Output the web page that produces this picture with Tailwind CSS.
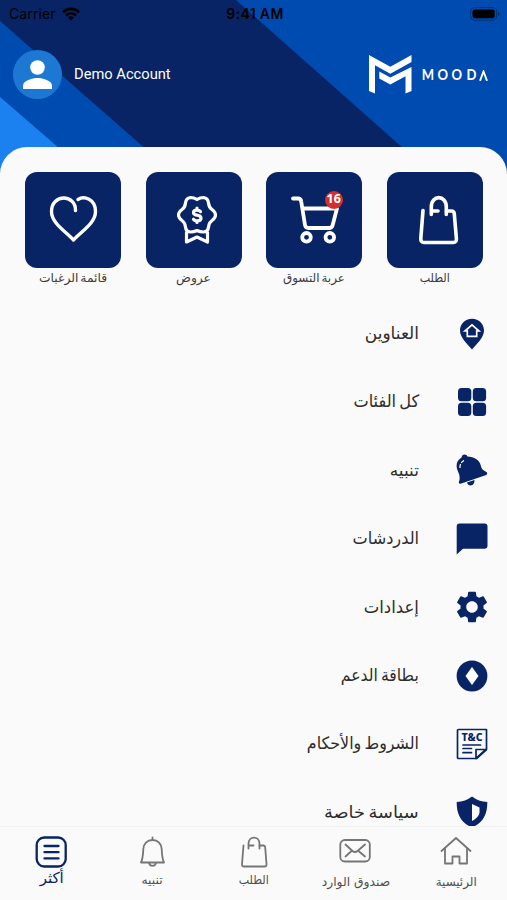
<!DOCTYPE html>
<html lang="ar">
<head>
  <meta charset="UTF-8">
  <meta name="viewport" content="width=device-width, initial-scale=1.0">
  <title>Mooda</title>
  <script src="https://cdn.jsdelivr.net/npm/@tailwindcss/browser@4"></script>
</head>
<body class="bg-[#fafafa] font-['DejaVu_Sans',sans-serif]">
  <div class="relative w-[507px] h-[900px] overflow-hidden flex flex-col">

    <!-- Header background -->
    <svg class="absolute inset-x-0 top-0" width="507" height="180" viewBox="0 0 507 180">
      <rect width="507" height="180" fill="#082465"/>
      <path d="M0 21L181 180H0z" fill="#004baf"/>
      <path d="M0 97L96 180H0z" fill="#1b80f0"/>
      <path d="M236 0L439 180H507V0z" fill="#004baf"/>
    </svg>

    <!-- Status bar -->
    <div class="relative h-[27px] shrink-0 flex items-center justify-between pl-[9px] pr-[6px] text-black font-['Inter',sans-serif] text-[14px]">
      <div class="flex items-center gap-[6px] w-[120px]">
        <span class="tracking-[0.1px]">Carrier</span>
        <svg width="18" height="14" viewBox="0 0 18 14" fill="none" stroke="#000" stroke-width="2.6">
          <path d="M1 5.2C5.500.8 12.500.8 17 5.2"/>
          <path d="M4 8.500c2.900-2.700 7.100-2.700 10 0"/>
          <path d="M9 13.500L6 10.500c1.800-1.600 4.200-1.600 6 0z" fill="#000" stroke="none"/>
        </svg>
      </div>
      <span class="font-semibold tracking-[0.35px]">9:41 AM</span>
      <div class="w-[120px] flex justify-end">
        <svg width="31" height="14" viewBox="0 0 31 14">
          <rect x=".6" y=".6" width="26" height="12.600" rx="4" fill="none" stroke="#000" stroke-opacity=".35"/>
          <rect x="2.500" y="2.500" width="22.200" height="8.800" rx="2.200"/>
          <path d="M28 5v4c2-.6 2-3.400 0-4z" fill-opacity=".4"/>
        </svg>
      </div>
    </div>

    <!-- Account + logo -->
    <div class="relative h-[120px] shrink-0 flex items-start justify-between pl-[13px] pr-[19px] pt-[23px]">
      <div class="flex items-center gap-3">
        <svg width="49" height="49" viewBox="0 0 49 49">
          <circle cx="24.500" cy="24.500" r="24.500" fill="#1c78d2"/>
          <circle cx="24.500" cy="17.500" r="7.300" fill="#fff"/>
          <path d="M10 39v-3.500c0-4.900 9.700-7.500 14.500-7.500S39 30.600 39 35.500V39z" fill="#fff"/>
        </svg>
        <span class="text-white font-['Roboto',sans-serif] text-[14.700px]">Demo Account</span>
      </div>
      <div class="flex items-center gap-[9px] pt-[5px]">
        <svg width="43" height="39" viewBox="0 0 43 39" fill="#fff">
          <path d="M0 0L21.300 11.800 42.500 0v7L21.300 18.700 6 10.200V38.500L0 36z"/>
          <path d="M10.300 16.500L21.300 22.600 42.500 12v24l-6 2.500V21.200L21.300 29.500 10.300 23.500z"/>
        </svg>
        <div class="w-[67px] flex items-center justify-between text-white font-['Lato',sans-serif] font-bold text-[14.500px] leading-none pt-[2px]">
          <span class="scale-x-90">M</span><span class="scale-x-90">O</span><span class="scale-x-90">O</span><span class="scale-x-90">D</span>
          <svg width="9" height="11" viewBox="0 0 9 11" fill="none" stroke="#fff" stroke-width="1.900"><path d="M1 10.800L4.500 1.500 8 10.800"/></svg>
        </div>
      </div>
    </div>

    <!-- Sheet -->
    <main dir="rtl" class="relative flex-1 min-h-0 overflow-hidden bg-[#fafafa] rounded-t-[27px] pt-[25px]">
      <div class="flex justify-between pr-[24.500px] pl-[25px] text-[12.300px] text-[#3c3c3c] [word-spacing:-2px]">
        <div class="w-24 flex flex-col items-center">
          <div class="size-24 rounded-[12px] bg-[#082465]">
            <svg width="96" height="96" viewBox="0 0 96 96" fill="none" stroke="#fff" stroke-width="3.600" stroke-linecap="round" stroke-linejoin="round">
              <path d="M36 38.500L33.800 66.500q-.2 4 3.200 4H66.200q3.500 0 3.200-4L67.300 42q-.2-3-3-3H59.500"/>
              <path d="M44.300 42.500V35c0-12.500 15-12.500 15 0v7.500M44.300 39H51"/>
            </svg>
          </div>
          <span class="leading-[20px] whitespace-nowrap scale-x-90">الطلب</span>
        </div>
        <div class="w-24 flex flex-col items-center">
          <div class="relative size-24 rounded-[12px] bg-[#082465]">
            <svg width="96" height="96" viewBox="0 0 96 96" fill="none" stroke="#fff" stroke-width="3.800" stroke-linecap="round" stroke-linejoin="round">
              <path d="M27 26.500h5q2.800 0 3.200 3L39 53q.5 3 3.500 3H63q3 0 3.700-3L71 36.500H37"/>
              <circle cx="40.500" cy="65.300" r="4.300"/>
              <circle cx="63.800" cy="65.300" r="4.300"/>
            </svg>
            <span class="absolute left-[59px] top-[19px] size-[17.500px] rounded-full bg-[#d32f2f] text-white font-['Noto_Sans',sans-serif] font-bold text-[12.500px] flex items-center justify-center">16</span>
          </div>
          <span class="leading-[20px] whitespace-nowrap scale-x-[.97]">عربة التسوق</span>
        </div>
        <div class="w-24 flex flex-col items-center">
          <div class="size-24 rounded-[12px] bg-[#082465]">
            <svg width="96" height="96" viewBox="0 0 96 96" fill="none" stroke="#fff" stroke-width="3.200" stroke-linecap="round" stroke-linejoin="round">
              <path d="M51 27.500Q54 25.500 57.500 25.500 62 26 62.500 31 63 35.500 66 37.500 69.500 40 69.500 43 69.500 46 66 48.500 63 50.500 62.500 55 62 60 57.500 60 54 60 51 58.500 48 60 44.500 60 40 60 39.500 55 39 50.500 36 48.500 32.500 46 32.500 43 32.500 40 36 37.500 39 35.500 39.500 31 40 26 44.500 25.500 48 25.500 51 27.500z"/>
              <path d="M40.500 60.500v9.500l10.500-5 10.500 5V60.500"/>
              <path d="M54.500 39.700q-1-1.500-3.500-1.500-3.500 0-3.500 2.600 0 1.800 3.500 2.400 4 .7 4 3 0 2.600-4 2.600-2.500 0-3.500-1.500M51 36v2M51 49V50.500"/>
            </svg>
          </div>
          <span class="leading-[20px] whitespace-nowrap">عروض</span>
        </div>
        <div class="w-24 flex flex-col items-center">
          <div class="size-24 rounded-[12px] bg-[#082465]">
            <svg width="96" height="96" viewBox="0 0 96 96" fill="none" stroke="#fff" stroke-width="3.400" stroke-linecap="round" stroke-linejoin="round">
              <path d="M50.500 38.500C51 22 26.500 21.500 26.500 39.500 26.500 51 40 59 48.500 68 57 59 70.500 51 70.500 39.500 70.500 27 59 23.500 53 27.500"/>
            </svg>
          </div>
          <span class="leading-[20px] whitespace-nowrap">قائمة الرغبات</span>
        </div>
      </div>

      <ul class="mt-[11.500px] text-[17px] text-[#2d2d2d] [word-spacing:-2px]">
        <li class="h-[68.400px] flex items-center pr-[19px] gap-[37px]">
          <svg width="32" height="32" viewBox="0 0 32 32"><path d="M16 .7C9 .7 4 6 4 12.500 4 19.500 11 25.500 16 31.500 21 25.500 28 19.500 28 12.500 28 6 23 .7 16 .7z" fill="#082465"/><path d="M9 13L16 6.800l7 6.200H20.700v5.300h-9.400V13z" fill="none" stroke="#fff" stroke-width="1.700"/></svg>
          <span>العناوين</span>
        </li>
        <li class="h-[68.400px] flex items-center pr-[19px] gap-[37px]">
          <svg width="32" height="32" viewBox="0 0 32 32" fill="#082465"><rect x="2" y="2" width="13.300" height="13.300" rx="3.500"/><rect x="16.800" y="2" width="13.300" height="13.300" rx="3.500"/><rect x="2" y="16.800" width="13.300" height="13.300" rx="3.500"/><rect x="16.800" y="16.800" width="13.300" height="13.300" rx="3.500"/></svg>
          <span class="origin-right scale-x-[.95]">كل الفئات</span>
        </li>
        <li class="h-[68.400px] flex items-center pr-[19px] gap-[37px]">
          <svg width="32" height="32" viewBox="0 0 32 32"><path d="M5.500 3.500Q6 .5 8.500.5 11 .5 11.500 2.500C18 2.500 23.500 6 24.800 11.500Q25.500 16 30.500 18 32 19.500 30.300 21L4.500 29.800Q2 29.500 3.200 27 4.500 22.500 2.200 18C-.8 12 .5 6.500 5.500 3.500z" fill="#082465"/><path d="M11 28.500L18.500 26Q18.500 30.500 15.500 31.300 12 32 11 28.500z" fill="#082465"/><path d="M4 14Q3.500 9 8 6.500" fill="none" stroke="#fff" stroke-width="1.200" stroke-dasharray="4 1.500"/></svg>
          <span>تنبيه</span>
        </li>
        <li class="h-[68.400px] flex items-center pr-[19px] gap-[37px]">
          <svg width="32" height="32" viewBox="0 0 32 32" fill="#082465"><path d="M3.500 .5H28.500Q31.500 .5 31.500 3.500V22.700Q31.500 25.700 28.500 25.700H7L.7 31.500V3.500Q.7 .5 3.500 .5z"/></svg>
          <span class="origin-right scale-x-[.95]">الدردشات</span>
        </li>
        <li class="h-[68.400px] flex items-center pr-[19px] gap-[37px]">
          <svg width="32" height="32" viewBox="2 2 20 20" fill="#082465"><path d="M19.140 12.940c.04-.3.060-.61.060-.94 0-.32-.02-.64-.07-.94l2.030-1.580c.18-.14.230-.41.120-.61l-1.920-3.320c-.12-.22-.37-.29-.59-.22l-2.390.96c-.5-.38-1.030-.7-1.620-.94l-.36-2.540c-.04-.24-.24-.41-.48-.41h-3.840c-.24 0-.43.170-.47.410l-.36 2.540c-.59.240-1.130.57-1.620.94l-2.390-.96c-.22-.08-.47 0-.59.220L2.740 8.870c-.12.210-.08.470.12.610l2.030 1.580c-.05.300-.09.630-.09.940s.02.640.070.940l-2.030 1.580c-.18.140-.23.410-.12.610l1.920 3.320c.12.220.37.290.59.220l2.390-.96c.5.380 1.030.7 1.620.94l.36 2.540c.05.240.24.410.48.410h3.840c.24 0 .44-.17.470-.41l.36-2.540c.59-.24 1.130-.56 1.620-.94l2.390.96c.22.080.47 0 .59-.22l1.920-3.320c.12-.22.070-.47-.12-.61l-2.010-1.580zM12 15.600c-1.980 0-3.600-1.620-3.600-3.600s1.620-3.600 3.600-3.600 3.600 1.620 3.600 3.600-1.620 3.600-3.600 3.600z"/></svg>
          <span class="origin-right scale-x-[.97]">إعدادات</span>
        </li>
        <li class="h-[68.400px] flex items-center pr-[19px] gap-[37px]">
          <svg width="32" height="32" viewBox="0 0 32 32"><circle cx="16" cy="16" r="15.400" fill="#082465"/><path d="M16 7L22.500 16 16 25 9.500 16z" fill="#fff"/></svg>
          <span class="origin-right scale-x-[.92]">بطاقة الدعم</span>
        </li>
        <li class="h-[68.400px] flex items-center pr-[19px] gap-[37px]">
          <svg width="32" height="32" viewBox="0 0 32 32" fill="none" stroke="#082465" stroke-width="1.700" stroke-linejoin="round" stroke-linecap="round">
            <path d="M2.500 1.500H30.500V21.500L20.500 30.500H2.500Q1.500 30.500 1.500 29.500V2.500Q1.500 1.500 2.500 1.500z"/>
            <path d="M30 21.500H20V30.500z"/>
            <path d="M7 17h17.500M7 20.500h8.500M7 24.700h8.500"/>
            <text x="16" y="12.800" direction="ltr" text-anchor="middle" textLength="21" lengthAdjust="spacingAndGlyphs" font-family="Noto Sans" font-weight="800" font-size="10.500" fill="#082465" stroke="none">T&amp;C</text>
          </svg>
          <span class="origin-right scale-x-[.935]">الشروط والأحكام</span>
        </li>
        <li class="h-[68.400px] flex items-center pr-[19px] gap-[37px]">
          <svg width="32" height="32" viewBox="0 0 32 32"><path d="M16 .5Q22.500 5.500 31.300 6C31.500 18 27.500 26.500 16 31.500 4.500 26.500.5 18 .7 6Q9.500 5.500 16 .5z" fill="#082465"/><path d="M16 8L23.500 11.500V17Q22.500 21.500 16 25z" fill="#fff"/></svg>
          <span class="origin-right scale-x-[1.045]">سياسة خاصة</span>
        </li>
      </ul>
    </main>

    <!-- Bottom navigation -->
    <nav dir="rtl" class="relative h-[74px] shrink-0 grid grid-cols-5 bg-[#fafafa] border-t border-[#f1f1f1] pt-[9px] text-[12.300px] text-[#4f4f4f]">
      <div class="flex flex-col items-center">
        <svg width="32" height="32" viewBox="0 0 32 32" fill="none" stroke="#757575" stroke-width="1.800" stroke-linecap="round" stroke-linejoin="round"><path d="M1.500 15L16 2 30.500 15"/><path d="M5 12.500V27.500H12.500V20.500H19.500V27.500H27V12.500"/></svg>
        <span class="mt-[4px] leading-[20px] whitespace-nowrap scale-x-[.97]">الرئيسية</span>
      </div>
      <div class="flex flex-col items-center">
        <svg width="32" height="32" viewBox="0 0 32 32" fill="none" stroke="#757575" stroke-width="1.800" stroke-linecap="round" stroke-linejoin="round"><rect x="1.300" y="4" width="29.500" height="21.500" rx="4.500"/><path d="M6.500 8.500L13.500 15q2.500 2 5 0L26 8.500M6.500 20.500L12.500 15M26 20.500L19.500 15"/></svg>
        <span class="mt-[4px] leading-[20px] whitespace-nowrap relative left-[1px]">صندوق الوارد</span>
      </div>
      <div class="flex flex-col items-center">
        <svg width="32" height="32" viewBox="0 0 32 32" fill="none" stroke="#757575" stroke-width="1.800" stroke-linecap="round" stroke-linejoin="round"><path d="M5.500 9.500L4 28q-.2 2.500 2 2.500H26.500q2.200 0 2-2.500L27.200 11.500q-.2-2-2-2H21.500"/><path d="M10.500 12.500V8c0-8.500 11-8.500 11 0v4.500M10.500 9.500H15.500"/></svg>
        <span class="mt-[2px] leading-[20px] whitespace-nowrap scale-x-90">الطلب</span>
      </div>
      <div class="flex flex-col items-center">
        <svg width="32" height="32" viewBox="0 0 32 32" fill="none" stroke="#757575" stroke-width="1.800" stroke-linecap="round" stroke-linejoin="round"><path d="M16.500 1.500V4M16.500 4C11 4 7.500 8 7.300 13 7 19.500 7 22.500 5 26.500H28C26 22.500 26 19.500 25.700 13 25.500 8 22 4 16.500 4zM13 26.500q.2 3.300 3.500 3.300t3.500-3.300"/></svg>
        <span class="mt-[2px] leading-[20px] whitespace-nowrap">تنبيه</span>
      </div>
      <div class="flex flex-col items-center text-[#082465] text-[15px]">
        <svg width="32" height="32" viewBox="0 0 32 32" fill="none" stroke="#082465" stroke-width="2.300" stroke-linecap="round"><rect x="1.700" y="1.500" width="29" height="29" rx="7.500"/><path d="M9.500 10h14M9.500 16.200h14M9.500 22.400h14"/></svg>
        <span class="leading-[20px] whitespace-nowrap relative left-[1px]">أكثر</span>
      </div>
    </nav>
  </div>
</body>
</html>
